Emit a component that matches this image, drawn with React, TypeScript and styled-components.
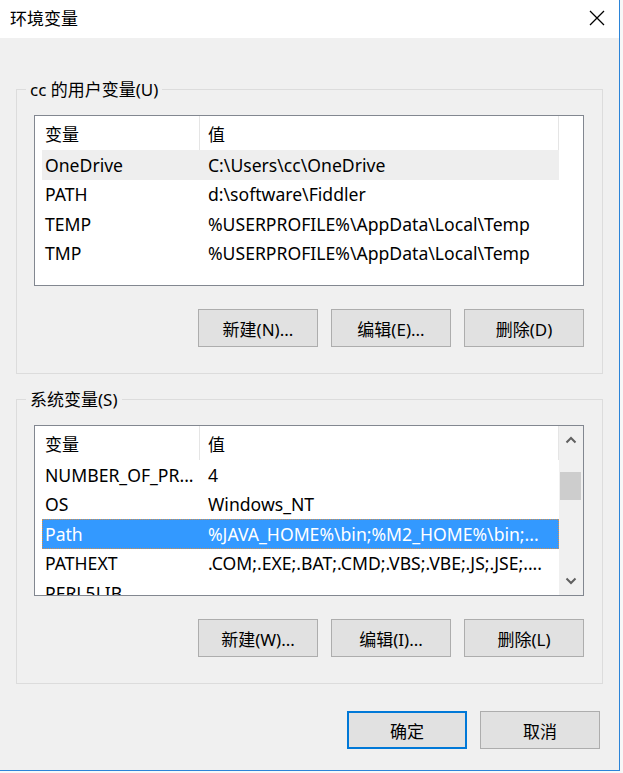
import React from "react";
import styled, { createGlobalStyle } from "styled-components";

const GlobalStyle = createGlobalStyle`
  html, body { margin: 0; padding: 0; background: #ffffff; }
  body { font-family: "Noto Sans", "Noto Sans CJK SC", sans-serif; }
  * { box-sizing: border-box; }
`;

const Desktop = styled.div`
  width: 623px;
  height: 773px;
  background: #f7f7f7;
  overflow: hidden;
`;

const Dialog = styled.div`
  width: 620px;
  height: 771px;
  background: #f0f0f0;
  border-right: 1px solid #2b84d8;
  border-bottom: 1px solid #2b84d8;
  display: flex;
  flex-direction: column;
  color: #000;
  font-size: 17px;
`;

const TitleBar = styled.div`
  height: 38px;
  flex-shrink: 0;
  background: #ffffff;
  display: flex;
  align-items: center;
  justify-content: space-between;
  padding: 0 14px 0 10px;
`;

const Title = styled.span`
  font-size: 17px;
  line-height: 20px;
  margin-bottom: 1px;
`;

const CloseButton = styled.div`
  width: 16px;
  height: 16px;
  display: flex;
  margin-bottom: 3px;
`;

const Content = styled.div`
  padding: 0 16px;
  display: flex;
  flex-direction: column;
`;

const Group = styled.fieldset<{ $top: number }>`
  margin: ${(p) => p.$top}px 0 0;
  padding: 13px 18px 26px 17px;
  border: 1px solid #dcdcdc;
  min-width: 0;
`;

const GroupLabel = styled.legend`
  margin-left: -8px;
  padding: 0 4px;
  line-height: 25px;
  font-size: 17px;
`;

const ListView = styled.div`
  height: 171px;
  border: 1px solid #828790;
  background: #ffffff;
  display: flex;
  overflow: hidden;
`;

const ListBody = styled.div`
  flex: 1;
  min-width: 0;
  display: flex;
  flex-direction: column;
`;

const HeaderRow = styled.div`
  display: grid;
  grid-template-columns: 158px 359px;
  margin-left: 7px;
  height: 34px;
  flex-shrink: 0;
`;

const HeaderCell = styled.div<{ $first?: boolean }>`
  border-right: 1px solid #e5e5e5;
  display: flex;
  align-items: center;
  padding-left: ${(p) => (p.$first ? 3 : 8)}px;
  font-size: 17px;
`;

const Row = styled.div<{ $state?: "hover" | "selected" }>`
  display: grid;
  grid-template-columns: 158px 359px;
  margin-left: 7px;
  height: 29.5px;
  flex-shrink: 0;
  align-items: center;
  font-size: 17.6px;
  background: ${(p) =>
    p.$state === "selected" ? "#3399ff" : p.$state === "hover" ? "#eeeeee" : "transparent"};
  color: ${(p) => (p.$state === "selected" ? "#ffffff" : "#000000")};
  outline: ${(p) => (p.$state === "selected" ? "1px dotted #d8914a" : "none")};
  outline-offset: -1px;
`;

const Cell = styled.div<{ $first?: boolean }>`
  padding-left: ${(p) => (p.$first ? 3 : 8)}px;
  white-space: nowrap;
  overflow: hidden;
`;

const ScrollBar = styled.div<{ $visible?: boolean }>`
  width: 24px;
  flex-shrink: 0;
  background: ${(p) => (p.$visible ? "#f0f0f0" : "transparent")};
  display: flex;
  flex-direction: column;
`;

const ScrollArrow = styled.div`
  height: 28px;
  flex-shrink: 0;
  display: flex;
  align-items: center;
  justify-content: center;
`;

const ScrollTrack = styled.div`
  flex: 1;
`;

const ScrollThumb = styled.div`
  height: 28px;
  margin: 18px 2px 0 1px;
  background: #cdcdcd;
`;

const ButtonRow = styled.div`
  display: flex;
  justify-content: flex-end;
  gap: 13px;
  margin-top: 23px;
`;

const Button = styled.button<{ $primary?: boolean }>`
  width: 120px;
  height: 38px;
  padding: 0;
  background: #e1e1e1;
  border: ${(p) => (p.$primary ? "2px solid #0078d7" : "1px solid #adadad")};
  font-family: inherit;
  font-size: 17px;
  color: #000;
`;

const Footer = styled.div`
  display: flex;
  justify-content: flex-end;
  gap: 13px;
  margin-top: 27px;
  padding-right: 19px;
`;

type Item = { name: string; value: string; state?: "hover" | "selected" };

const userVars: Item[] = [
  { name: "OneDrive", value: "C:\\Users\\cc\\OneDrive", state: "hover" },
  { name: "PATH", value: "d:\\software\\Fiddler" },
  { name: "TEMP", value: "%USERPROFILE%\\AppData\\Local\\Temp" },
  { name: "TMP", value: "%USERPROFILE%\\AppData\\Local\\Temp" },
];

const systemVars: Item[] = [
  { name: "NUMBER_OF_PR...", value: "4" },
  { name: "OS", value: "Windows_NT" },
  { name: "Path", value: "%JAVA_HOME%\\bin;%M2_HOME%\\bin;...", state: "selected" },
  { name: "PATHEXT", value: ".COM;.EXE;.BAT;.CMD;.VBS;.VBE;.JS;.JSE;...." },
  { name: "PERL5LIB", value: "" },
];

const Chevron = ({ up }: { up?: boolean }) => (
  <svg width="12" height="8" viewBox="0 0 12 8">
    <path
      d={up ? "M1.5 6.5 L6 2 L10.5 6.5" : "M1.5 1.5 L6 6 L10.5 1.5"}
      fill="none"
      stroke="#606060"
      strokeWidth="2"
    />
  </svg>
);

const VarList = ({ items, scroll }: { items: Item[]; scroll?: boolean }) => (
  <ListView>
    <ListBody>
      <HeaderRow>
        <HeaderCell $first>变量</HeaderCell>
        <HeaderCell>值</HeaderCell>
      </HeaderRow>
      {items.map((it) => (
        <Row key={it.name} $state={it.state}>
          <Cell $first>{it.name}</Cell>
          <Cell>{it.value}</Cell>
        </Row>
      ))}
    </ListBody>
    {scroll ? (
      <ScrollBar $visible>
        <ScrollArrow>
          <Chevron up />
        </ScrollArrow>
        <ScrollTrack>
          <ScrollThumb />
        </ScrollTrack>
        <ScrollArrow>
          <Chevron />
        </ScrollArrow>
      </ScrollBar>
    ) : (
      <ScrollBar />
    )}
  </ListView>
);

export default function App() {
  return (
    <>
      <GlobalStyle />
      <Desktop>
        <Dialog>
          <TitleBar>
            <Title>环境变量</Title>
            <CloseButton>
              <svg width="16" height="16" viewBox="0 0 16 16">
                <path d="M1 1 L15 15 M15 1 L1 15" stroke="#000" strokeWidth="1.3" fill="none" />
              </svg>
            </CloseButton>
          </TitleBar>
          <Content>
            <Group $top={39}>
              <GroupLabel>cc 的用户变量(U)</GroupLabel>
              <VarList items={userVars} />
              <ButtonRow>
                <Button>新建(N)...</Button>
                <Button>编辑(E)...</Button>
                <Button>删除(D)</Button>
              </ButtonRow>
            </Group>
            <Group $top={13}>
              <GroupLabel>系统变量(S)</GroupLabel>
              <VarList items={systemVars} scroll />
              <ButtonRow>
                <Button>新建(W)...</Button>
                <Button>编辑(I)...</Button>
                <Button>删除(L)</Button>
              </ButtonRow>
            </Group>
          </Content>
          <Footer>
            <Button $primary>确定</Button>
            <Button>取消</Button>
          </Footer>
        </Dialog>
      </Desktop>
    </>
  );
}
